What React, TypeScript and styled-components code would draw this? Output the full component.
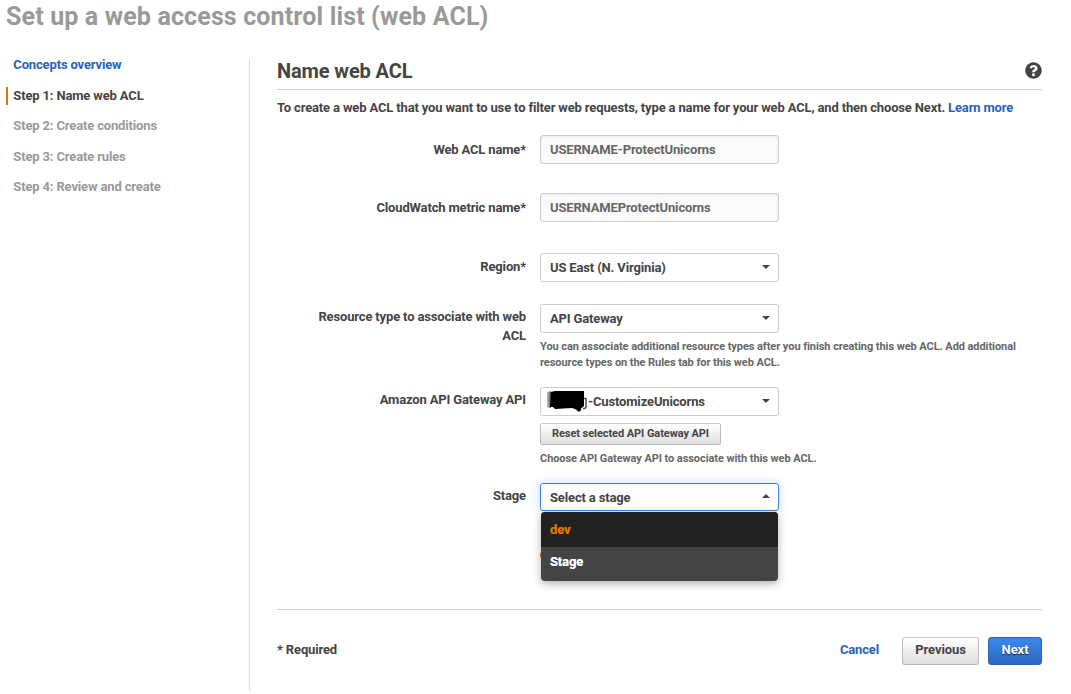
import React from "react";
import styled, { createGlobalStyle } from "styled-components";
import { FaQuestionCircle } from "react-icons/fa";

const GlobalStyle = createGlobalStyle`
  *, *::before, *::after { box-sizing: border-box; }
  body {
    margin: 0;
    background: #fff;
    color: #444;
    font: 700 13px/19px Roboto, "Liberation Sans", sans-serif;
    letter-spacing: -0.15px;
    overflow: hidden;
  }
`;

const Page = styled.div`
  width: 1071px;
  height: 694px;
  padding: 0 29px 2px 6px;
  display: flex;
  flex-direction: column;
`;

const Title = styled.h1`
  margin: 0;
  height: 59px;
  font-size: 25px;
  line-height: 34px;
  font-weight: 700;
  letter-spacing: 0.14px;
  color: #999;
  white-space: nowrap;
`;

const Columns = styled.div`
  flex: 1;
  display: flex;
`;

const Sidebar = styled.nav`
  width: 244px;
  border-right: 1px solid #ddd;
  display: flex;
  flex-direction: column;
  gap: 12.5px;
`;

const Step = styled.a<{ $tone: "link" | "current" | "idle" }>`
  height: 18px;
  line-height: 18px;
  margin-top: ${(p) => (p.$tone === "link" ? "-3px" : "0")};
  padding-left: ${(p) => (p.$tone === "current" ? "5.3px" : "7.3px")};
  border-left: ${(p) => (p.$tone === "current" ? "2px solid #d87607" : "0")};
  color: ${(p) => ({ link: "#2a62bc", current: "#444", idle: "#999" })[p.$tone]};
`;

const Main = styled.main`
  flex: 1;
  padding-left: 27px;
  display: flex;
  flex-direction: column;
`;

const SectionHeader = styled.header`
  height: 31px;
  border-bottom: 1px solid #ccc;
  display: flex;
  justify-content: space-between;
  align-items: flex-start;
`;

const Heading = styled.h2`
  margin: 0;
  font-size: 20px;
  line-height: 25px;
  font-weight: 700;
  letter-spacing: -0.12px;
`;

const HelpIcon = styled(FaQuestionCircle)`
  width: 17px;
  height: 17px;
  margin-top: 3px;
`;

const Intro = styled.p`
  margin: 8px 0 18px;
  white-space: nowrap;
`;

const Link = styled.a`
  color: #2a62bc;
`;

const Form = styled.form`
  height: 475px;
  border-bottom: 1px solid #ccc;
`;

const Row = styled.div<{ $height: number }>`
  height: ${(p) => p.$height}px;
  display: grid;
  grid-template-columns: 249px 500px;
  column-gap: 14px;
  align-items: start;
`;

const Label = styled.label<{ $drop?: number }>`
  padding: ${(p) => p.$drop ?? 3}px 0 0 25px;
  text-align: right;
`;

const Field = styled.div`
  position: relative;
  display: flex;
  flex-direction: column;
  align-items: flex-start;
`;

const TextInput = styled.input`
  width: 239px;
  height: 29px;
  padding: 0 9px;
  border: 1px solid #ccc;
  border-radius: 3px;
  background: #fbfbfb;
  box-shadow: inset 0 1px 3px rgba(0, 0, 0, 0.08);
  color: #666;
  font: inherit;
  letter-spacing: inherit;
`;

const Select = styled.div<{ $open?: boolean }>`
  width: 239px;
  height: ${(p) => (p.$open ? 28 : 29)}px;
  padding: ${(p) => (p.$open ? "1px" : "0")} 8px 0 9px;
  border: 1px solid ${(p) => (p.$open ? "#3a83e2" : "#ccc")};
  border-radius: 3px;
  background: #fff;
  box-shadow: ${(p) => (p.$open ? "0 0 8px rgba(82, 150, 236, 0.35)" : "none")};
  display: flex;
  align-items: center;
  justify-content: space-between;
`;

const Caret = styled.span<{ $up?: boolean }>`
  border: 4px solid transparent;
  border-width: ${(p) => (p.$up ? "0 4px 4px" : "4px 4px 0")};
  border-top-color: ${(p) => (p.$up ? "transparent" : "#444")};
  border-bottom-color: ${(p) => (p.$up ? "#444" : "transparent")};
  margin-bottom: ${(p) => (p.$up ? 4 : 2)}px;
`;

const ApiName = styled.span`
  display: flex;
  align-items: center;
`;

const Redaction = styled.svg`
  width: 41px;
  height: 25px;
  margin-left: -3px;
`;

const Hint = styled.p`
  margin: 6px 0 0;
  width: 490px;
  color: #666;
  font-size: 11px;
  line-height: 16px;
  letter-spacing: -0.07px;
`;

const Menu = styled.ul`
  position: absolute;
  z-index: 1;
  top: 29px;
  left: 1px;
  width: 237px;
  height: 69px;
  margin: 0;
  padding: 0;
  list-style: none;
  border-radius: 4px;
  background: #444;
  overflow: hidden;
  box-shadow: 0 3px 8px rgba(0, 0, 0, 0.3);
`;

const MenuItem = styled.li<{ $active?: boolean }>`
  height: ${(p) => (p.$active ? 35 : 30)}px;
  line-height: ${(p) => (p.$active ? 35 : 30)}px;
  padding-left: 9px;
  background: ${(p) => (p.$active ? "#222" : "#444")};
  color: ${(p) => (p.$active ? "#d87607" : "#fff")};
  text-shadow: 0 0 0.6px currentColor;
`;

/* Edge of the validation marker that the open menu covers. */
const ErrorMark = styled.span`
  position: absolute;
  top: 69px;
  left: 0;
  width: 5px;
  height: 6px;
  border-radius: 3px;
  background: #d87607;
`;

const Button = styled.button<{ $kind?: "small" | "primary" }>`
  height: ${(p) => (p.$kind === "small" ? 22 : 28)}px;
  width: ${(p) => (p.$kind === "small" ? 181 : p.$kind === "primary" ? 54 : 77)}px;
  margin-top: ${(p) => (p.$kind === "small" ? 7 : 0)}px;
  padding: 0 0 ${(p) => (p.$kind === "small" ? 2 : 3)}px;
  border: 1px solid;
  border-color: ${(p) => (p.$kind === "primary" ? "#2a62bc" : "#ccc #bbb #b5b5b5")};
  border-radius: ${(p) => (p.$kind === "small" ? 2 : 3)}px;
  background: ${(p) =>
    p.$kind === "primary"
      ? "linear-gradient(#3c89e9, #2c68c4)"
      : "linear-gradient(#fff, #dedede)"};
  color: ${(p) => (p.$kind === "primary" ? "#fff" : "#444")};
  text-shadow: ${(p) => (p.$kind === "primary" ? "0 1px 1px #123" : "none")};
  font: inherit;
  font-size: ${(p) => (p.$kind === "small" ? 11 : 13)}px;
  line-height: 19px;
  letter-spacing: -0.07px;
  white-space: nowrap;
`;

const Footer = styled.footer`
  height: 28px;
  margin-top: 27px;
  display: flex;
  align-items: flex-start;
`;

const Required = styled.span`
  flex: 1;
  padding-top: 3px;
`;

const Cancel = styled(Link)`
  padding-top: 3px;
  margin-right: 23px;
`;

const Actions = styled.div`
  display: flex;
  gap: 9px;
`;

const steps = [
  { label: "Concepts overview", tone: "link" },
  { label: "Step 1: Name web ACL", tone: "current" },
  { label: "Step 2: Create conditions", tone: "idle" },
  { label: "Step 3: Create rules", tone: "idle" },
  { label: "Step 4: Review and create", tone: "idle" },
] as const;

export default function App() {
  return (
    <>
      <GlobalStyle />
      <Page>
        <Title>Set up a web access control list (web ACL)</Title>
        <Columns>
          <Sidebar>
            {steps.map((s) => (
              <Step key={s.label} $tone={s.tone}>
                {s.label}
              </Step>
            ))}
          </Sidebar>
          <Main>
            <SectionHeader>
              <Heading>Name web ACL</Heading>
              <HelpIcon />
            </SectionHeader>
            <Intro>
              To create a web ACL that you want to use to filter web requests, type a name for your
              web ACL, and then choose Next. <Link>Learn more</Link>
            </Intro>
            <Form>
              <Row $height={58}>
                <Label $drop={5}>Web ACL name*</Label>
                <TextInput readOnly value="USERNAME-ProtectUnicorns" />
              </Row>
              <Row $height={60}>
                <Label $drop={5}>CloudWatch metric name*</Label>
                <TextInput readOnly value="USERNAMEProtectUnicorns" />
              </Row>
              <Row $height={51}>
                <Label $drop={4}>Region*</Label>
                <Select>
                  US East (N. Virginia)
                  <Caret />
                </Select>
              </Row>
              <Row $height={83}>
                <Label>Resource type to associate with web ACL</Label>
                <Field>
                  <Select>
                    API Gateway
                    <Caret />
                  </Select>
                  <Hint>
                    You can associate additional resource types after you finish creating this web
                    ACL. Add additional resource types on the Rules tab for this web ACL.
                  </Hint>
                </Field>
              </Row>
              <Row $height={96}>
                <Label>Amazon API Gateway API</Label>
                <Field>
                  <Select>
                    <ApiName>
                      <Redaction viewBox="0 0 41 25" aria-hidden="true">
                        <defs>
                          <linearGradient id="smudge">
                            <stop offset="0" stopColor="#ddd" />
                            <stop offset="1" stopColor="#555" />
                          </linearGradient>
                        </defs>
                        <path d="M-1 4L4 2V19L-1 18Z" fill="url(#smudge)" />
                        <path d="M36 9.5H39V17Q39 20 36 19.5" fill="none" stroke="#555" strokeWidth="1.6" />
                        <path
                          d="M4 3L8 2H37V17L34 19.5V21L32 23L29 20.5L25 19L8 20L6 18H3Z"
                          fill="#000"
                        />
                      </Redaction>
                      -CustomizeUnicorns
                    </ApiName>
                    <Caret />
                  </Select>
                  <Button type="button" $kind="small">
                    Reset selected API Gateway API
                  </Button>
                  <Hint>Choose API Gateway API to associate with this web ACL.</Hint>
                </Field>
              </Row>
              <Row $height={29}>
                <Label>Stage</Label>
                <Field>
                  <Select $open>
                    Select a stage
                    <Caret $up />
                  </Select>
                  <ErrorMark />
                  <Menu>
                    <MenuItem $active>dev</MenuItem>
                    <MenuItem>Stage</MenuItem>
                  </Menu>
                </Field>
              </Row>
            </Form>
            <Footer>
              <Required>* Required</Required>
              <Cancel>Cancel</Cancel>
              <Actions>
                <Button type="button">Previous</Button>
                <Button type="button" $kind="primary">
                  Next
                </Button>
              </Actions>
            </Footer>
          </Main>
        </Columns>
      </Page>
    </>
  );
}
